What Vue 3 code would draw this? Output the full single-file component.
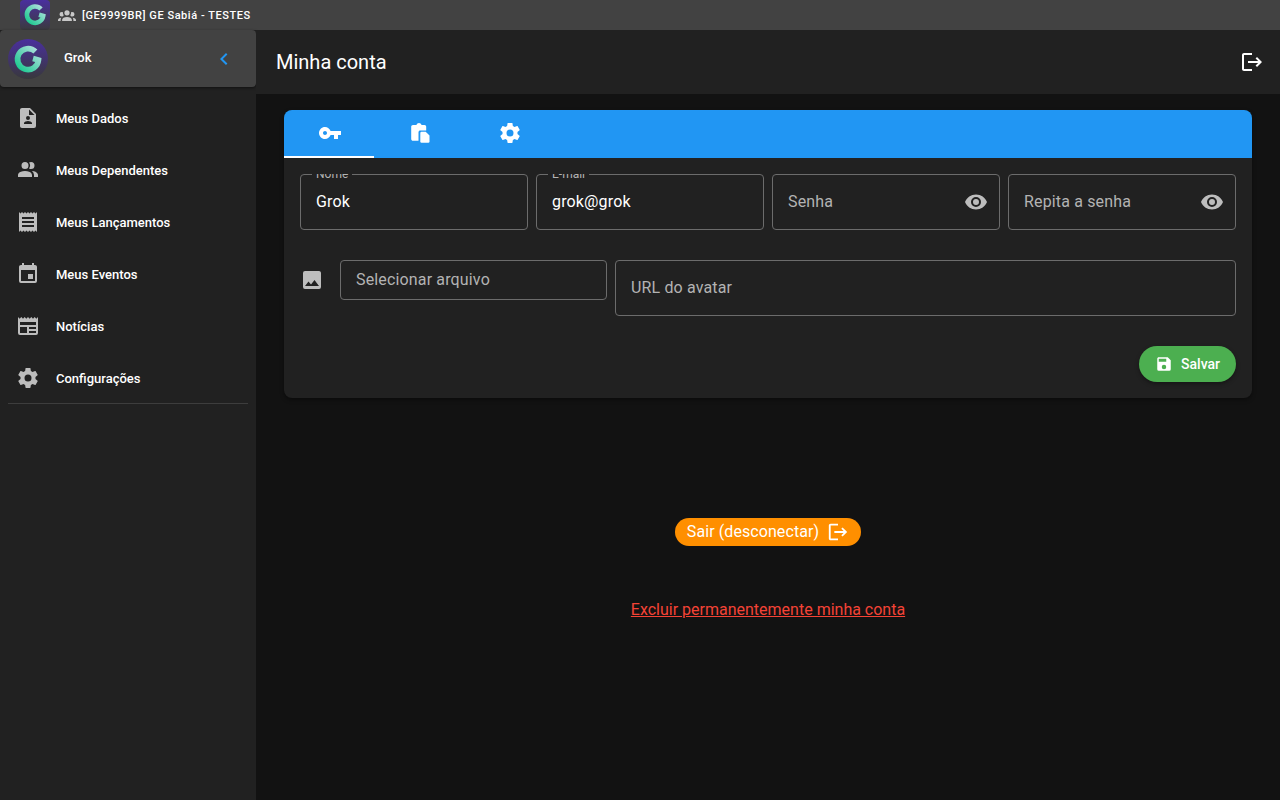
<template>
  <div class="app-shell">
    <header class="system-bar">
      <svg class="logo logo-square" viewBox="0 0 30 30">
        <defs>
          <linearGradient id="bgSquare" x1="0" y1="0" x2="0" y2="1">
            <stop offset="0" stop-color="#4a2f9e" />
            <stop offset="1" stop-color="#3a3a3e" />
          </linearGradient>
          <linearGradient id="ringSquare" x1="0" y1="1" x2="1" y2="0">
            <stop offset="0" stop-color="#16c98d" />
            <stop offset="1" stop-color="#b5dfe0" />
          </linearGradient>
        </defs>
        <rect width="30" height="30" rx="4" fill="url(#bgSquare)" />
        <path d="M21 9 A8.2 8.2 0 1 0 23.2 16 L19 14.8" fill="none" stroke="url(#ringSquare)" stroke-width="4.6" />
      </svg>
      <svg class="icon group-icon" viewBox="0 0 24 24"><path :d="icons.group" /></svg>
      <span class="system-title">[GE9999BR] GE Sabiá - TESTES</span>
    </header>

    <div class="body-row">
      <aside class="sidebar">
        <div class="profile">
          <svg class="logo logo-round" viewBox="0 0 40 40">
            <defs>
              <linearGradient id="bgRound" x1="0" y1="0" x2="0" y2="1">
                <stop offset="0" stop-color="#4a2f9e" />
                <stop offset="1" stop-color="#38383c" />
              </linearGradient>
              <linearGradient id="ringRound" x1="0" y1="1" x2="1" y2="0">
                <stop offset="0" stop-color="#16c98d" />
                <stop offset="1" stop-color="#b5dfe0" />
              </linearGradient>
            </defs>
            <circle cx="20" cy="20" r="20" fill="url(#bgRound)" />
            <path d="M27.4 12.6 A10.5 10.5 0 1 0 30.5 21 L25 19.5" fill="none" stroke="url(#ringRound)" stroke-width="5.6" />
          </svg>
          <span class="profile-name">Grok</span>
          <svg class="icon chevron" viewBox="0 0 24 24"><path :d="icons.chevron" /></svg>
        </div>

        <nav class="nav">
          <a v-for="item in menu" :key="item.label" class="nav-item" href="#">
            <svg class="icon nav-icon" viewBox="0 0 24 24"><path :d="item.icon" /></svg>
            <span>{{ item.label }}</span>
          </a>
        </nav>
        <hr class="divider" />
      </aside>

      <div class="content">
        <div class="page-header">
          <h1>Minha conta</h1>
          <svg class="icon header-exit" viewBox="0 0 24 24"><path :d="icons.logout" /></svg>
        </div>

        <main class="page">
          <section class="card">
            <div class="tabs">
              <button class="tab active">
                <svg class="icon" viewBox="0 0 24 24"><path :d="icons.key" /></svg>
              </button>
              <button class="tab">
                <svg class="icon" viewBox="0 0 24 24">
                  <path :d="icons.clipboard" />
                  <path d="M13.5 10.8h4.2l3.8 3.8v5.9a1.2 1.2 0 0 1-1.2 1.2h-6.8a1.2 1.2 0 0 1-1.2-1.2v-8.5a1.2 1.2 0 0 1 1.2-1.2z" />
                </svg>
              </button>
              <button class="tab">
                <svg class="icon" viewBox="0 0 24 24"><path :d="icons.cog" /></svg>
              </button>
            </div>

            <div class="field-row">
              <label v-for="field in fields" :key="field.placeholder" class="field">
                <span v-if="field.value" class="field-label">{{ field.placeholder }}</span>
                <input
                  v-model="field.value"
                  :placeholder="field.value ? '' : field.placeholder"
                  type="text"
                />
                <svg v-if="field.eye" class="icon eye" viewBox="0 0 24 24"><path :d="icons.eye" /></svg>
              </label>
            </div>

            <div class="avatar-row">
              <svg class="icon image-icon" viewBox="0 0 24 24"><path :d="icons.image" /></svg>
              <label class="field file-field">
                <input type="text" placeholder="Selecionar arquivo" />
              </label>
              <label class="field url-field">
                <input type="text" placeholder="URL do avatar" />
              </label>
            </div>

            <div class="card-actions">
              <button class="save-btn">
                <svg class="icon" viewBox="0 0 24 24"><path :d="icons.save" /></svg>
                Salvar
              </button>
            </div>
          </section>

          <button class="logout-btn">
            Sair (desconectar)
            <svg class="icon" viewBox="0 0 24 24"><path :d="icons.logout" /></svg>
          </button>

          <a class="delete-link" href="#">Excluir permanentemente minha conta</a>
        </main>
      </div>
    </div>
  </div>
</template>

<script setup>
import { reactive } from "vue";

// Material Design icon paths
const icons = {
  group:
    "M12,5.5A3.5,3.5 0 0,1 15.5,9A3.5,3.5 0 0,1 12,12.5A3.5,3.5 0 0,1 8.5,9A3.5,3.5 0 0,1 12,5.5M5,8C5.56,8 6.08,8.15 6.53,8.42C6.38,9.85 6.8,11.27 7.66,12.38C7.16,13.34 6.16,14 5,14A3,3 0 0,1 2,11A3,3 0 0,1 5,8M19,8A3,3 0 0,1 22,11A3,3 0 0,1 19,14C17.84,14 16.84,13.34 16.34,12.38C17.2,11.27 17.62,9.85 17.47,8.42C17.92,8.15 18.44,8 19,8M5.5,18.25C5.5,16.18 8.41,14.5 12,14.5C15.59,14.5 18.5,16.18 18.5,18.25V20H5.5V18.25M0,20V18.5C0,17.11 1.89,15.94 4.45,15.6C3.86,16.28 3.5,17.22 3.5,18.25V20H0M24,20H20.5V18.25C20.5,17.22 20.14,16.28 19.55,15.6C22.11,15.94 24,17.11 24,18.5V20Z",
  chevron: "M15.41,16.58L10.83,12L15.41,7.41L14,6L8,12L14,18L15.41,16.58Z",
  logout:
    "M17 7L15.59 8.41 18.17 11H8V13H18.17L15.59 15.58 17 17L22 12M4 5H12V3H4C2.9 3 2 3.9 2 5V19C2 20.1 2.9 21 4 21H12V19H4V5Z",
  key: "M7 14C5.9 14 5 13.1 5 12S5.9 10 7 10 9 10.9 9 12 8.1 14 7 14M12.6 10C11.8 7.7 9.6 6 7 6C3.7 6 1 8.7 1 12S3.7 18 7 18C9.6 18 11.8 16.3 12.6 14H16V18H20V14H23V10H12.6Z",
  clipboard:
    "M16.5 4H13.6C13.2 2.8 12.2 2 11 2S8.8 2.8 8.4 4H5C4 4 3.2 4.8 3.2 5.8V18C3.2 19 4 19.8 5 19.8H10.5V11.2C10.5 10.2 11.3 9.5 12.2 9.5H18.2V5.8C18.2 4.8 17.5 4 16.5 4Z",
  cog: "M12,15.5A3.5,3.5 0 0,1 8.5,12A3.5,3.5 0 0,1 12,8.5A3.5,3.5 0 0,1 15.5,12A3.5,3.5 0 0,1 12,15.5M19.43,12.97C19.47,12.65 19.5,12.33 19.5,12C19.5,11.67 19.47,11.34 19.43,11L21.54,9.37C21.73,9.22 21.78,8.95 21.66,8.73L19.66,5.27C19.54,5.05 19.27,4.96 19.05,5.05L16.56,6.05C16.04,5.66 15.5,5.32 14.87,5.07L14.5,2.42C14.46,2.18 14.25,2 14,2H10C9.75,2 9.54,2.18 9.5,2.42L9.13,5.07C8.5,5.32 7.96,5.66 7.44,6.05L4.95,5.05C4.73,4.96 4.46,5.05 4.34,5.27L2.34,8.73C2.21,8.95 2.27,9.22 2.46,9.37L4.57,11C4.53,11.34 4.5,11.67 4.5,12C4.5,12.33 4.53,12.65 4.57,12.97L2.46,14.63C2.27,14.78 2.21,15.05 2.34,15.27L4.34,18.73C4.46,18.95 4.73,19.03 4.95,18.95L7.44,17.94C7.96,18.34 8.5,18.68 9.13,18.93L9.5,21.58C9.54,21.82 9.75,22 10,22H14C14.25,22 14.46,21.82 14.5,21.58L14.87,18.93C15.5,18.67 16.04,18.34 16.56,17.94L19.05,18.95C19.27,19.03 19.54,18.95 19.66,18.73L21.66,15.27C21.78,15.05 21.73,14.78 21.54,14.63L19.43,12.97Z",
  eye: "M12,9A3,3 0 0,0 9,12A3,3 0 0,0 12,15A3,3 0 0,0 15,12A3,3 0 0,0 12,9M12,17A5,5 0 0,1 7,12A5,5 0 0,1 12,7A5,5 0 0,1 17,12A5,5 0 0,1 12,17M12,4.5C7,4.5 2.73,7.61 1,12C2.73,16.39 7,19.5 12,19.5C17,19.5 21.27,16.39 23,12C21.27,7.61 17,4.5 12,4.5Z",
  image:
    "M8.5,13.5L11,16.5L14.5,12L19,18H5M21,19V5C21,3.89 20.1,3 19,3H5A2,2 0 0,0 3,5V19A2,2 0 0,0 5,21H19A2,2 0 0,0 21,19Z",
  save: "M15,9H5V5H15M12,19A3,3 0 0,1 9,16A3,3 0 0,1 12,13A3,3 0 0,1 15,16A3,3 0 0,1 12,19M17,3H5C3.89,3 3,3.9 3,5V19A2,2 0 0,0 5,21H19A2,2 0 0,0 21,19V7L17,3Z",
};

const menu = [
  {
    label: "Meus Dados",
    icon: "M13,9H18.5L13,3.5V9M6,2H14L20,8V20A2,2 0 0,1 18,22H6C4.89,22 4,21.1 4,20V4C4,2.89 4.89,2 6,2M16,18V17C16,15.67 13.33,15 12,15C10.67,15 8,15.67 8,17V18H16M12,10A2,2 0 0,0 10,12A2,2 0 0,0 12,14A2,2 0 0,0 14,12A2,2 0 0,0 12,10Z",
  },
  {
    label: "Meus Dependentes",
    icon: "M16 17V19H2V17S2 13 9 13 16 17 16 17M12.5 7.5A3.5 3.5 0 1 0 9 11A3.5 3.5 0 0 0 12.5 7.5M15.94 13A5.32 5.32 0 0 1 18 17V19H22V17S22 13.37 15.94 13M15 4A3.39 3.39 0 0 0 13.07 4.59A5 5 0 0 1 13.07 10.41A3.39 3.39 0 0 0 15 11A3.5 3.5 0 0 0 15 4Z",
  },
  {
    label: "Meus Lançamentos",
    icon: "M3,22L4.5,20.5L6,22L7.5,20.5L9,22L10.5,20.5L12,22L13.5,20.5L15,22L16.5,20.5L18,22L19.5,20.5L21,22V2L19.5,3.5L18,2L16.5,3.5L15,2L13.5,3.5L12,2L10.5,3.5L9,2L7.5,3.5L6,2L4.5,3.5L3,2M18,9H6V7H18M18,13H6V11H18M18,17H6V15H18V17Z",
  },
  {
    label: "Meus Eventos",
    icon: "M19,19H5V8H19M16,1V3H8V1H6V3H5C3.89,3 3,3.89 3,5V19A2,2 0 0,0 5,21H19A2,2 0 0,0 21,19V5C21,3.89 20.1,3 19,3H18V1M17,12H12V17H17V12Z",
  },
  {
    label: "Notícias",
    icon: "M20,11H4V8H20M20,15H13V13H20M20,19H13V17H20M11,19H4V13H11M20.33,4.67L18.67,3L17,4.67L15.33,3L13.67,4.67L12,3L10.33,4.67L8.67,3L7,4.67L5.33,3L3.67,4.67L2,3V19A2,2 0 0,0 4,21H20A2,2 0 0,0 22,19V3L20.33,4.67Z",
  },
  { label: "Configurações", icon: icons.cog },
];

const fields = reactive([
  { placeholder: "Nome", value: "Grok" },
  { placeholder: "E-mail", value: "grok@grok" },
  { placeholder: "Senha", value: "", eye: true },
  { placeholder: "Repita a senha", value: "", eye: true },
]);
</script>

<style>
html,
body {
  background: #121212;
}
</style>

<style scoped>
.app-shell {
  width: 1280px;
  height: 800px;
  display: flex;
  flex-direction: column;
  overflow: hidden;
  background: #121212;
  font-family: Roboto, "Liberation Sans", sans-serif;
  color: #fff;
}

.icon {
  display: block;
  width: 24px;
  height: 24px;
  fill: currentColor;
  flex: none;
}

/* top bar */
.system-bar {
  height: 30px;
  flex: none;
  display: flex;
  align-items: center;
  padding-left: 20px;
  background: #424242;
}

.logo-square {
  width: 30px;
  height: 30px;
}

.group-icon {
  width: 18px;
  height: 18px;
  margin-left: 8px;
  color: #c8c8c8;
}

.system-title {
  margin-left: 6px;
  font-size: 11px;
  font-weight: 500;
  letter-spacing: 0.55px;
}

.body-row {
  flex: 1;
  display: flex;
  min-height: 0;
}

/* sidebar */
.sidebar {
  width: 256px;
  flex: none;
  background: #212121;
}

.profile {
  height: 57px;
  display: flex;
  align-items: center;
  padding-left: 8px;
  background: #424242;
  border-radius: 4px;
  box-shadow: 0 1px 3px rgba(0, 0, 0, 0.5);
}

.logo-round {
  width: 40px;
  height: 40px;
}

.profile-name {
  margin: 0 0 2px 16px;
  flex: 1;
  font-size: 13px;
  font-weight: 500;
}

.chevron {
  width: 24px;
  height: 24px;
  margin-right: 20px;
  color: #2196f3;
}

.nav {
  display: flex;
  flex-direction: column;
  padding-top: 5px;
}

.nav-item {
  height: 52px;
  display: flex;
  align-items: center;
  gap: 16px;
  padding-left: 16px;
  color: #fff;
  text-decoration: none;
  font-size: 13px;
  font-weight: 500;
}

.nav-icon {
  color: #bdbdbd;
}

.divider {
  margin: -1px 8px 0;
  border: 0;
  border-top: 1px solid #3d3d3d;
}

/* header */
.content {
  flex: 1;
  min-width: 0;
  display: flex;
  flex-direction: column;
}

.page-header {
  height: 64px;
  flex: none;
  display: flex;
  align-items: center;
  justify-content: space-between;
  padding: 0 16px 0 20px;
  background: #212121;
}

.page-header h1 {
  margin: 0;
  font-size: 20px;
  font-weight: 400;
}

.page {
  flex: 1;
  display: flex;
  flex-direction: column;
  align-items: center;
  padding: 16px 28px 0;
}

/* card */
.card {
  width: 100%;
  height: 288px;
  background: #212121;
  border-radius: 8px;
  overflow: hidden;
  box-shadow: 0 2px 4px rgba(0, 0, 0, 0.4);
}

.tabs {
  height: 48px;
  display: flex;
  background: #2196f3;
}

.tab {
  width: 90px;
  display: flex;
  align-items: center;
  justify-content: center;
  padding: 0 0 0 2px;
  border: 0;
  border-bottom: 2px solid transparent;
  background: none;
  color: #fff;
}

.tab.active {
  border-bottom-color: #fff;
}

/* the row clips the floating labels, as in the reference */
.field-row {
  display: grid;
  grid-template-columns: repeat(4, minmax(0, 1fr));
  gap: 8px;
  margin: 16px 16px 0;
  overflow: hidden;
}

.field {
  position: relative;
  height: 56px;
  box-sizing: border-box;
  display: flex;
  align-items: center;
  padding: 0 11px 0 15px;
  border: 1px solid #6c6c6c;
  border-radius: 4px;
}

.field input {
  flex: 1;
  min-width: 0;
  margin-bottom: 2px;
  padding: 0;
  border: 0;
  outline: 0;
  background: none;
  color: #fff;
  font: 400 16px Roboto, "Liberation Sans", sans-serif;
  letter-spacing: 0.15px;
}

.field input::placeholder {
  color: #b3b3b3;
  opacity: 1;
}

.field-label {
  position: absolute;
  top: -8px;
  left: 11px;
  padding: 0 4px;
  background: #212121;
  color: #b3b3b3;
  font-size: 12px;
  line-height: 14px;
}

.eye {
  color: #bdbdbd;
}

.avatar-row {
  display: flex;
  align-items: flex-start;
  gap: 8px;
  margin: 30px 16px 0;
}

.image-icon {
  margin: 8px 8px 0 0;
  color: #bdbdbd;
}

.file-field {
  width: 267px;
  height: 40px;
}

.url-field {
  flex: 1;
}

.card-actions {
  display: flex;
  justify-content: flex-end;
  margin: 30px 16px 0;
}

.save-btn {
  height: 36px;
  display: flex;
  align-items: center;
  gap: 8px;
  padding: 0 16px 1px;
  border: 0;
  border-radius: 18px;
  background: #4caf50;
  color: #fff;
  font: 500 14px Roboto, "Liberation Sans", sans-serif;
  box-shadow: 0 2px 4px rgba(0, 0, 0, 0.35);
}

.save-btn .icon {
  width: 18px;
  height: 18px;
}

.logout-btn {
  height: 28px;
  margin-top: 120px;
  display: flex;
  align-items: center;
  gap: 8px;
  padding: 0 12px 1px;
  border: 0;
  border-radius: 14px;
  background: #ff8f00;
  color: #fff;
  font: 400 16px Roboto, "Liberation Sans", sans-serif;
  letter-spacing: 0.08px;
}

.logout-btn .icon {
  width: 22px;
  height: 22px;
}

.delete-link {
  margin-top: 54px;
  color: #f44336;
  font-size: 16px;
  line-height: 19px;
}
</style>
